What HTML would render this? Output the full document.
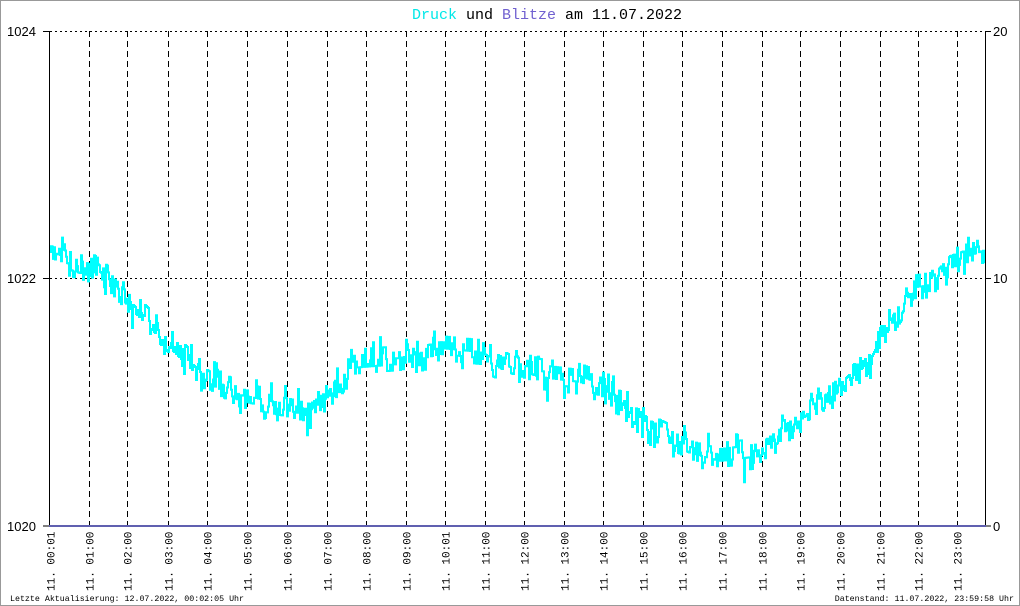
<!DOCTYPE html>
<html><head><meta charset="utf-8"><style>
html,body{margin:0;padding:0;background:#fff}
svg{display:block}
text{font-family:"Liberation Mono","DejaVu Sans Mono",monospace}
</style></head><body>
<svg id="s" width="1020" height="606" viewBox="0 0 1020 606" xmlns="http://www.w3.org/2000/svg">
<rect x="0.5" y="0.5" width="1019" height="605" fill="#fff" stroke="#999" stroke-width="1"/>
<text x="547" y="19" font-size="15" text-anchor="middle"><tspan fill="#00e8e8">Druck</tspan> und <tspan fill="#7060d0">Blitze</tspan> am 11.07.2022</text>
<g id="grid" stroke="#000" stroke-width="1" fill="none"></g>
<polyline id="data" fill="none" stroke="#00ffff" stroke-width="2"/>
<line x1="49.5" y1="31" x2="49.5" y2="526" stroke="#000"/>
<line x1="985.5" y1="31" x2="985.5" y2="526" stroke="#000"/>
<line x1="49" y1="526" x2="986" y2="526" stroke="#6060b0" stroke-width="2"/>
<g font-size="13" fill="#000">
<text x="7" y="36" style="font-family:'Liberation Sans',sans-serif">1024</text>
<text x="7" y="283" style="font-family:'Liberation Sans',sans-serif">1022</text>
<text x="7" y="531" style="font-family:'Liberation Sans',sans-serif">1020</text>
<text x="993" y="36" style="font-family:'Liberation Sans',sans-serif">20</text>
<text x="993" y="283" style="font-family:'Liberation Sans',sans-serif">10</text>
<text x="993" y="531" style="font-family:'Liberation Sans',sans-serif">0</text>
</g>
<line x1="43" y1="31.5" x2="49" y2="31.5" stroke="#000"/>
<line x1="43" y1="278.5" x2="49" y2="278.5" stroke="#000"/>
<line x1="43" y1="526" x2="49" y2="526" stroke="#000"/>
<line x1="986" y1="31.5" x2="991" y2="31.5" stroke="#000"/>
<line x1="986" y1="278.5" x2="991" y2="278.5" stroke="#000"/>
<line x1="986" y1="526" x2="991" y2="526" stroke="#000"/>
<g id="labels" font-size="11" fill="#000"></g>
<text x="10" y="601" font-size="8.3">Letzte Aktualisierung: 12.07.2022, 00:02:05 Uhr</text>
<text x="1014" y="601" font-size="8.3" text-anchor="end">Datenstand: 11.07.2022, 23:59:58 Uhr</text>
</svg>
<script>
var NS="http://www.w3.org/2000/svg";
var g=document.getElementById('grid'),lb=document.getElementById('labels');
function el(t,a,p){var e=document.createElementNS(NS,t);for(var k in a)e.setAttribute(k,a[k]);p.appendChild(e);return e;}
el('line',{x1:50,y1:31.5,x2:985,y2:31.5,'stroke-dasharray':'2,3'},g);
el('line',{x1:50,y1:278.5,x2:985,y2:278.5,'stroke-dasharray':'2,3'},g);
var xs=[50,89,127,168,207,247,287,327,366,406,445,485,524,564,603,643,682,722,762,800,840,880,918,957];
for(var h=0;h<24;h++){
 var x=xs[h]+0.5;
 if(h>0) el('line',{x1:x,y1:31,x2:x,y2:526,'stroke-dasharray':'6,4'},g);
 var lab="11. "+(h<10?"0":"")+h+":"+(h==0||h==10?"01":"00");
 var t=el('text',{x:0,y:0,transform:'translate('+(x+4)+',591) rotate(-90)'},lb);
 t.textContent=lab;
}
var kp=[[50,252],[90,264],[110,280],[130,302],[170,342],[200,372],[240,395],[290,405],[310,410],[330,395],[350,362],[400,358],[440,348],[480,352],[510,367],[540,377],[580,382],[620,397],[650,427],[690,447],[720,455],[760,450],[800,420],[840,390],[870,360],[890,320],[910,288],[930,285],[950,262],[985,250]];
function base(x){for(var i=0;i<kp.length-1;i++){if(x<=kp[i+1][0]){var a=kp[i],b=kp[i+1],f=(x-a[0])/(b[0]-a[0]);return a[1]+f*(b[1]-a[1]);}}return kp[kp.length-1][1];}
var s=123456789;function r(){s^=s<<13;s^=s>>>17;s^=s<<5;return ((s>>>0)%100000)/100000;}
var pts=[],off=0,prev=base(50);
for(var x=50;x<=985;x+=1){
 off+=Math.round((r()-0.5)*3)*6;
 if(off>8)off=6;if(off<-8)off=-6;
 var j=Math.round((r()-0.5)*4)*6;
 var spike=(r()<0.04)?(r()-0.5)*30:0;
 var y=base(x)+off+j+spike;
 pts.push(x+","+prev.toFixed(1));pts.push(x+","+y.toFixed(1));prev=y;
}
document.getElementById('data').setAttribute('points',pts.join(' '));
</script>
</body></html>
